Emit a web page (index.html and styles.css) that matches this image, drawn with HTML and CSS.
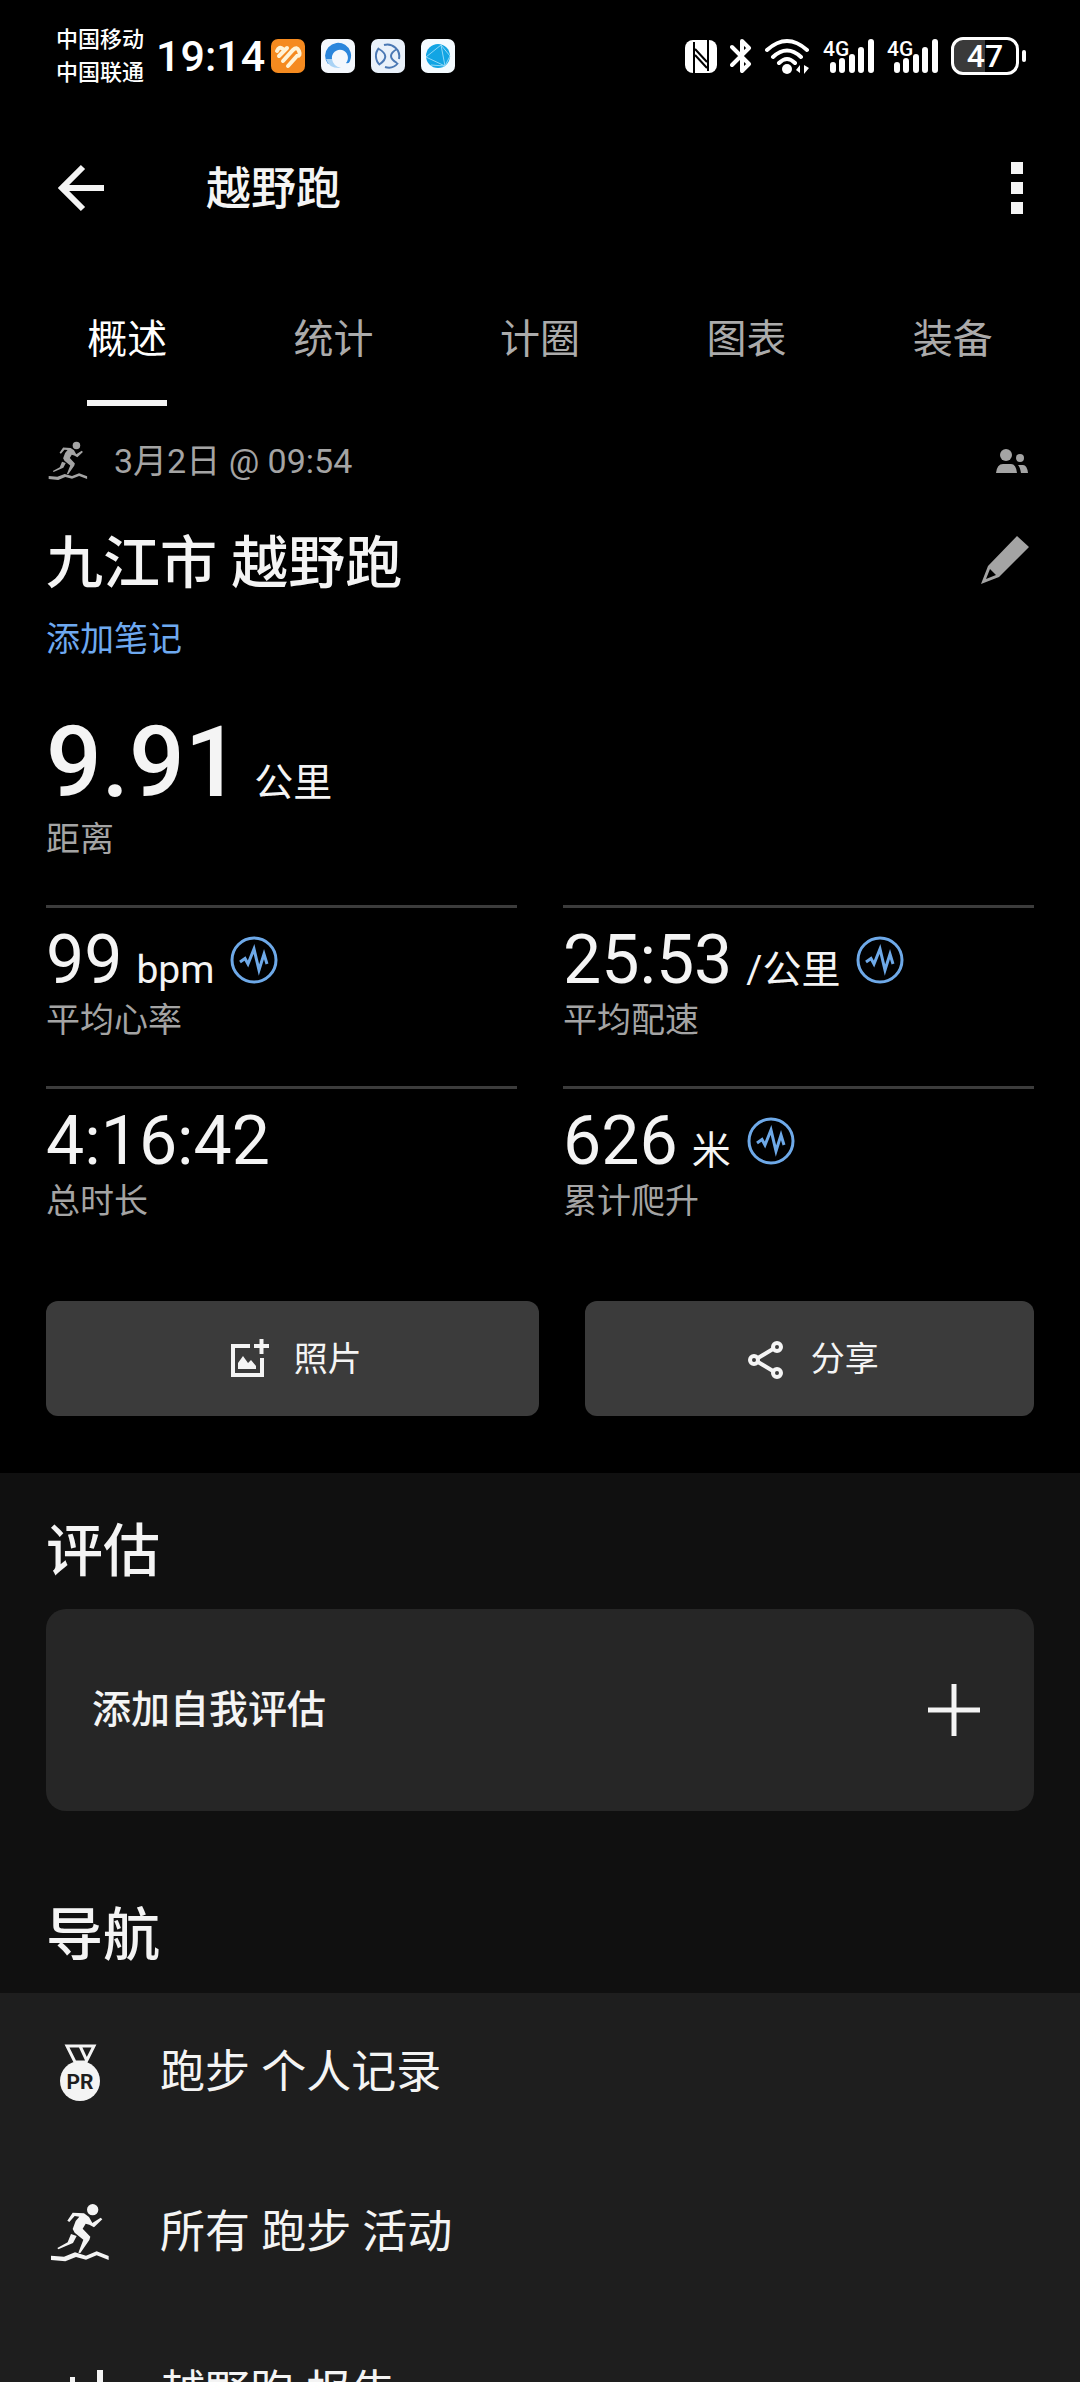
FILE: index.html
```html
<!DOCTYPE html>
<html lang="zh-CN">
<head>
<meta charset="utf-8">
<meta name="viewport" content="width=device-width, initial-scale=1">
<title>越野跑</title>
<link rel="stylesheet" href="styles.css">
</head>
<body>
<svg class="symbols" aria-hidden="true">
  <symbol id="trail-runner" viewBox="30 38 180 180">
    <circle cx="158" cy="58" r="17"/>
    <path d="M82 91 98 67 132 69 147 80 157 98 182 82 187 87 162 111 148 103 137 100 128 115 151 139 148 149 121 188 115 187 130 148 104 127 98 116 107 92 118 79 104 77 88 95Z"/>
    <path d="M93 131 110 137 99 158 55 177 52 173 83 156Z"/>
    <path d="M33 196 72 199 105 186 138 196 170 183 206 197V209L170 195 138 208 108 200 76 213 33 209Z"/>
  </symbol>
  <symbol id="activity" viewBox="0 0 48 48">
    <g fill="none" stroke="currentColor" stroke-width="3">
      <circle cx="24" cy="24" r="22"/>
      <path d="M10 26 15 22.5 18 28 24 13 29 34 34 18 37 28"/>
    </g>
  </symbol>
  <symbol id="signal" viewBox="0 0 51 38">
    <g stroke="currentColor" stroke-width="6" stroke-linecap="round">
      <path d="M10 28V33M19 24V33M29 20V33M38 13V33M48 5V33"/>
    </g>
  </symbol>
</svg>

<div class="screen">
  <header class="status">
    <div class="carriers"><span>中国移动</span><span>中国联通</span></div>
    <time class="clock">19:14</time>
    <div class="apps">
      <svg viewBox="0 0 34 34"><rect width="34" height="34" rx="7" fill="#f58a1f"/><g stroke="#fff3d6" stroke-width="4" stroke-linecap="round" fill="none"><path d="M6 12Q8 7 12 10M8 17 16 9M12 22 22 11Q26 7 28 12T26 17L17 27"/></g></svg>
      <svg viewBox="0 0 34 34"><rect width="34" height="34" rx="7" fill="#f4f8fd"/><path d="M7 25A13 13 0 1 1 29 22Q28 25 25 24A8 8 0 1 0 11 20Q10 24 7 25Z" fill="#2b86dc"/><path d="M5 20Q8 30 20 29Q12 27 11 20Z" fill="#a9d3f5"/></svg>
      <svg viewBox="0 0 34 34"><rect width="34" height="34" rx="7" fill="#e9f1fa"/><g fill="none" stroke="#4a78b4" stroke-width="2"><path d="M13 6A12 12 0 0 1 28 20M27 24A12 12 0 0 1 14 28M9 26A12 12 0 0 1 8 9M8 10Q20 17 9 25M26 10Q14 17 26 24"/></g></svg>
      <svg viewBox="0 0 34 34"><rect width="34" height="34" rx="7" fill="#f4fbff"/><circle cx="17" cy="17" r="12" fill="#12a5e4"/><path d="M5 18 20 6 24 27 5 18M20 6 29 17 24 27M10 26 24 27" fill="none" stroke="#8fd8f7" stroke-width="1"/></svg>
    </div>
    <div class="system">
      <svg width="32" height="38" viewBox="0 0 32 38"><rect y="3" width="32" height="33" rx="8" fill="currentColor"/><path d="M9 5V36M23 3V34M10 12 22 25M10 18 22 31" fill="none" stroke="#000" stroke-width="2"/></svg>
      <svg width="22" height="38" viewBox="0 0 22 38"><path d="M2 10 19 27 12 34V4L19 11 2 28" fill="none" stroke="currentColor" stroke-width="4" stroke-linejoin="round" stroke-linecap="round"/></svg>
      <svg width="45" height="38" viewBox="0 0 45 38"><g fill="none" stroke="currentColor" stroke-width="4" stroke-linecap="round"><path d="M2 13Q22 -5 42 13M8 20Q22 7 36 20M14 26Q22 18 30 26"/></g><circle cx="22" cy="32" r="5" fill="currentColor"/><path d="M31 33 35 28V36ZM39 28V37L44 31Z" fill="currentColor"/></svg>
      <svg width="51" height="38"><use href="#signal"/><text class="net" x="0" y="19">4G</text></svg>
      <svg width="51" height="38"><use href="#signal"/><text class="net" x="0" y="19">4G</text></svg>
      <div class="battery"><span class="battery-body">47</span><span class="battery-tip"></span></div>
    </div>
  </header>

  <div class="appbar">
    <button class="back" aria-label="返回"><svg width="60" height="60" viewBox="0 0 60 60"><path d="M52 30H10M31 9 10 30 31 51" fill="none" stroke="currentColor" stroke-width="6"/></svg></button>
    <h1>越野跑</h1>
    <button class="more" aria-label="更多"><i></i><i></i><i></i></button>
  </div>

  <nav class="tabs">
    <button class="tab active"><span>概述</span></button>
    <button class="tab"><span>统计</span></button>
    <button class="tab"><span>计圈</span></button>
    <button class="tab"><span>图表</span></button>
    <button class="tab"><span>装备</span></button>
  </nav>

  <main>
    <section class="summary">
      <div class="meta">
        <svg width="44" height="40"><use href="#trail-runner"/></svg>
        <span>3月2日 @ 09:54</span>
        <svg class="end" width="44" height="44" viewBox="0 0 44 44"><circle cx="16" cy="16" r="6"/><circle cx="30" cy="19" r="4"/><path d="M6 34Q7 25 13 25H21Q26 25 27 34ZM28 26H33Q37 26 38 34H31Q30 28 28 26Z"/></svg>
      </div>
      <div class="heading">
        <h2>九江市 越野跑</h2>
        <button class="edit" aria-label="编辑"><svg width="58" height="58" viewBox="-5 -3 58 58"><path fill-rule="evenodd" d="M36 0 48 11 18 41 0 48 7 30ZM9 33 5 43 15 39Z"/></svg></button>
      </div>
      <a class="note" href="#">添加笔记</a>

      <div class="distance">
        <div class="figure"><b>9.91</b><span class="unit">公里</span></div>
        <div class="label">距离</div>
      </div>

      <div class="stats">
        <div class="stat">
          <div class="value"><span class="figure"><b>99</b><span class="unit">bpm</span></span><svg><use href="#activity"/></svg></div>
          <div class="label">平均心率</div>
        </div>
        <div class="stat">
          <div class="value"><span class="figure"><b>25:53</b><span class="unit">/公里</span></span><svg><use href="#activity"/></svg></div>
          <div class="label">平均配速</div>
        </div>
        <div class="stat">
          <div class="value"><span class="figure"><b>4:16:42</b></span></div>
          <div class="label">总时长</div>
        </div>
        <div class="stat">
          <div class="value"><span class="figure"><b>626</b><span class="unit">米</span></span><svg><use href="#activity"/></svg></div>
          <div class="label">累计爬升</div>
        </div>
      </div>

      <div class="actions">
        <button class="action"><svg width="48" height="48" viewBox="0 0 48 48"><path d="M26 11H9V40H38V23M30 11H45M37.500 4V19" fill="none" stroke="currentColor" stroke-width="4"/><path d="M14 34V28L19 21 24 28 27 25 32 31V34Z"/></svg>照片</button>
        <button class="action"><svg width="48" height="48" viewBox="0 0 48 48"><g fill="none" stroke="currentColor" stroke-width="4"><circle cx="13" cy="25" r="4"/><circle cx="36" cy="12" r="4"/><circle cx="36" cy="38" r="4"/><path d="M17 23 32 14M17 27 32 36"/></g></svg>分享</button>
      </div>
    </section>

    <section class="extra">
      <h2>评估</h2>
      <button class="card"><span>添加自我评估</span><svg width="52" height="52" viewBox="0 0 52 52"><path d="M26 0V52M0 26H52" stroke="currentColor" stroke-width="5"/></svg></button>
      <h2 class="nav-title">导航</h2>
    </section>

    <nav class="links">
      <a href="#"><svg width="60" height="60" viewBox="0 0 60 60"><g fill="none" stroke="currentColor" stroke-width="3"><path d="M17 3H44L36 19H25ZM30 3 37 18"/></g><circle cx="30" cy="38" r="20"/><text class="pr" x="30" y="46" text-anchor="middle">PR</text></svg>跑步 个人记录</a>
      <a href="#"><svg width="60" height="60"><use href="#trail-runner"/></svg>所有 跑步 活动</a>
      <a href="#"><svg width="60" height="60" viewBox="0 0 60 60"><path d="M20 14H25V54H20ZM47 7H53V54H47ZM33 32H39V54H33Z"/></svg>越野跑 报告</a>
    </nav>
  </main>
</div>
</body>
</html>
```
FILE: styles.css
```css
* {
  box-sizing: border-box;
}

body {
  margin: 0;
  background: #000;
  color: #f4f4f4;
  font-family: Roboto, "Noto Sans CJK SC", sans-serif;
}

button {
  margin: 0;
  padding: 0;
  border: 0;
  background: none;
  color: inherit;
  font: inherit;
}

a {
  color: inherit;
  text-decoration: none;
}

svg {
  display: block;
  flex: none;
  fill: currentColor;
}

h1,
h2 {
  margin: 0;
  padding-top: 3px;
  font-weight: 500;
}

.symbols {
  position: absolute;
  width: 0;
  height: 0;
}

.screen {
  height: 100vh;
  overflow: hidden;
}

/* Status bar */

.status {
  display: flex;
  align-items: center;
  height: 112px;
  padding: 0 54px 0 56px;
  color: #fff;
}

.carriers {
  display: flex;
  flex-direction: column;
  font-size: 22px;
  font-weight: 500;
  line-height: 33px;
}

.clock {
  margin-left: 12px;
  font-size: 43px;
  font-weight: 500;
  line-height: 40px;
}

.apps {
  display: flex;
  gap: 16px;
  margin-left: 6px;
}

.apps svg {
  width: 34px;
  height: 34px;
}

.system {
  display: flex;
  align-items: center;
  gap: 13px;
  margin-left: auto;
}

.net {
  font-size: 21px;
  font-weight: 500;
}

.battery {
  display: flex;
  align-items: center;
  gap: 3px;
}

.battery-body {
  width: 68px;
  height: 38px;
  border: 3px solid #fff;
  border-radius: 12px;
  background: linear-gradient(90deg, #3a3a3a 50%, #000 50%);
  font-size: 32px;
  font-weight: 500;
  line-height: 32px;
  text-align: center;
}

.battery-tip {
  width: 4px;
  height: 12px;
  border-radius: 2px;
  background: #fff;
}

/* App bar and tabs */

.appbar {
  display: flex;
  align-items: center;
  height: 152px;
  padding: 0 46px;
}

.back {
  display: grid;
  place-items: center;
  width: 72px;
  height: 72px;
}

.appbar h1 {
  margin-left: 88px;
  font-size: 45px;
  line-height: 60px;
}

.more {
  display: flex;
  flex-direction: column;
  align-items: center;
  gap: 8px;
  width: 34px;
  margin-left: auto;
}

.more i {
  width: 12px;
  height: 12px;
  background: #f4f4f4;
}

.tabs {
  display: flex;
  padding: 0 24px;
}

.tab {
  flex: 1;
  color: #ababab;
  font-size: 40px;
}

.tab span {
  display: inline-block;
  padding: 46px 0 30px;
  border-bottom: 6px solid transparent;
  line-height: 60px;
}

.tab.active {
  color: #fff;
}

.tab.active span {
  border-color: #f4f4f4;
}

/* Summary */

.summary {
  padding: 35px 46px 57px;
}

.meta {
  display: flex;
  align-items: center;
  gap: 24px;
  height: 40px;
  color: #a4a4a4;
  font-size: 34px;
  line-height: 40px;
}

.meta .end {
  margin-left: auto;
}

.heading {
  display: flex;
  align-items: center;
  justify-content: space-between;
  margin-top: 45px;
}

h2 {
  font-size: 57px;
  line-height: 69px;
}

.edit {
  color: #a4a4a4;
}

.note {
  display: block;
  width: max-content;
  margin-top: 18px;
  color: #6ea9f0;
  font-size: 34px;
  line-height: 46px;
}

.figure {
  display: flex;
  align-items: baseline;
  gap: 14px;
}

.figure b {
  font-size: 68px;
  font-weight: 400;
  line-height: 80px;
}

.unit {
  font-size: 39px;
  line-height: 40px;
}

.label {
  color: #a4a4a4;
  font-size: 34px;
  line-height: 40px;
}

.distance {
  margin: 45px 0 46px;
}

.distance b {
  font-size: 98px;
  font-weight: 500;
  line-height: 112px;
}

.stats {
  display: grid;
  grid-template-columns: 1fr 1fr;
  column-gap: 46px;
}

.stat {
  padding: 12px 0 46px;
  border-top: 3px solid #3c3c3c;
}

.value {
  display: flex;
  align-items: center;
  gap: 16px;
}

.value svg {
  width: 48px;
  height: 48px;
  color: #6ea9e8;
}

.actions {
  display: grid;
  grid-template-columns: 11fr 10fr;
  gap: 46px;
  margin-top: 34px;
}

.action {
  display: flex;
  align-items: center;
  justify-content: center;
  gap: 22px;
  height: 115px;
  border-radius: 12px;
  background: #3b3b3b;
  font-size: 34px;
  line-height: 40px;
}

/* Self evaluation */

.extra {
  padding: 41px 46px 23px;
  background: #101010;
}

.card {
  display: flex;
  align-items: center;
  justify-content: space-between;
  width: 100%;
  height: 202px;
  margin: 23px 0 87px;
  padding: 0 54px 0 46px;
  border-radius: 20px;
  background: #262626;
  font-size: 39px;
  font-weight: 500;
  line-height: 60px;
}

/* Navigation list */

.links {
  background: #1e1e1e;
}

.links a {
  display: flex;
  align-items: center;
  gap: 50px;
  height: 160px;
  padding: 0 50px;
  font-size: 45px;
  line-height: 60px;
}

.pr {
  fill: #1e1e1e;
  font-size: 21px;
  font-weight: 700;
}
```
